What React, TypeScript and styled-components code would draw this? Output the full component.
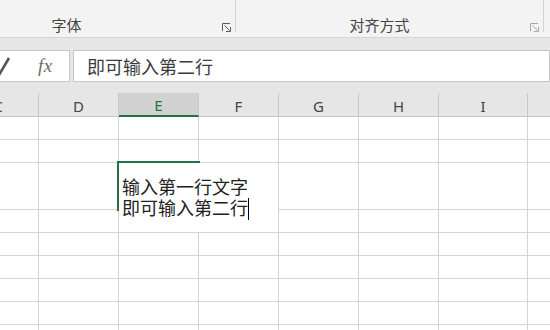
import React from 'react';
import styled, { createGlobalStyle } from 'styled-components';

const GlobalStyle = createGlobalStyle`
  html, body { margin: 0; padding: 0; background: #ffffff; }
  body { font-family: "Noto Sans", "Noto Sans CJK SC", sans-serif; }
  * { box-sizing: border-box; }
`;

const EXCEL_GREEN = '#217346';
const GRID = '#d4d4d4';

type Col = { label: string; w: number; sel?: boolean };
const COLS: Col[] = [
  { label: 'C', w: 81 },
  { label: 'D', w: 80 },
  { label: 'E', w: 80, sel: true },
  { label: 'F', w: 80 },
  { label: 'G', w: 80 },
  { label: 'H', w: 80 },
  { label: 'I', w: 89 },
  { label: '', w: 80 },
];
const ROWS = [23, 23, 47, 23, 23, 23, 23, 23, 23];
const colTemplate = COLS.map((c) => `${c.w}px`).join(' ');
const rowTemplate = ROWS.map((h) => `${h}px`).join(' ');

const Window = styled.div`
  width: 550px;
  height: 330px;
  overflow: hidden;
  background: #ffffff;
  display: flex;
  flex-direction: column;
`;

/* ---------- Ribbon ---------- */
const Ribbon = styled.div`
  flex: 0 0 auto;
  height: 38px;
  margin-left: -82px;
  background: #f3f3f3;
  border-bottom: 1px solid #d5d5d5;
  display: flex;
  align-items: flex-start;
`;

const Group = styled.div<{ $w: number }>`
  width: ${(p) => p.$w}px;
  height: 32px;
  border-right: 1px solid #d2d2d2;
  display: flex;
  flex: 0 0 auto;
`;

const GroupLabel = styled.div`
  flex: 1;
  padding-top: 17px;
  text-align: center;
  font-family: "Noto Sans CJK SC", sans-serif;
  font-size: 15px;
  line-height: 15px;
  color: #444444;
  white-space: nowrap;
`;

const LauncherSlot = styled.div`
  width: 20px;
  flex: 0 0 20px;
  padding: 23px 0 0 7px;
`;

const Launcher = ({ dim }: { dim?: boolean }) => (
  <svg width="9" height="9" viewBox="0 0 9 9" style={{ display: 'block' }}>
    <g fill="none" stroke={dim ? '#a8a8a8' : '#5c5c5c'} strokeWidth="1">
      <path d="M0.5 8 V0.5 H8" />
      <path d="M2.5 2.5 L7.5 7.5" />
      <path d="M4 8.5 H8.5 V4" />
    </g>
  </svg>
);

/* ---------- Formula bar ---------- */
const Band = styled.div`
  flex: 0 0 auto;
  background: #e6e6e6;
  padding: 12px 0 11px;
`;

const FormulaRow = styled.div`
  height: 32px;
  display: flex;
  gap: 3px;
`;

const NameArea = styled.div`
  width: 70px;
  flex: 0 0 70px;
  background: #ffffff;
  border: 1px solid #c6c6c6;
  border-left: none;
  display: flex;
  align-items: center;
`;

const CheckIcon = styled.svg`
  display: block;
  flex: 0 0 auto;
  overflow: visible;
`;

const Fx = styled.span`
  margin-left: 27px;
  font-family: "Liberation Serif", serif;
  font-style: italic;
  font-size: 19px;
  line-height: 30px;
  color: #6e6e6e;
  letter-spacing: 0.5px;
`;

const FormulaInput = styled.div`
  flex: 1;
  min-width: 0;
  background: #ffffff;
  border: 1px solid #c6c6c6;
  padding-left: 13px;
  font-family: "Noto Sans CJK SC", sans-serif;
  font-size: 18px;
  line-height: 30px;
  color: #3c3c3c;
  white-space: nowrap;
`;

/* ---------- Sheet ---------- */
const Sheet = styled.div`
  margin-left: -42px;
  width: 650px;
  flex: 1;
`;

const HeaderRow = styled.div`
  display: grid;
  grid-template-columns: ${colTemplate};
  background: #e6e6e6;
`;

const HeaderCell = styled.div<{ $sel?: boolean }>`
  height: 24px;
  display: flex;
  align-items: center;
  justify-content: center;
  padding-top: 2px;
  border-right: 1px solid #c8c8c8;
  border-bottom: ${(p) => (p.$sel ? `2px solid ${EXCEL_GREEN}` : '1px solid #c6c6c6')};
  background: ${(p) => (p.$sel ? '#d2d2d2' : 'transparent')};
  color: ${(p) => (p.$sel ? EXCEL_GREEN : '#444444')};
  font-family: "Noto Sans", sans-serif;
  font-size: 15px;
  line-height: 20px;
`;

const Body = styled.div`
  position: relative;
  display: grid;
  grid-template-columns: ${colTemplate};
  grid-template-rows: ${rowTemplate};
`;

const Cell = styled.div`
  border-right: 1px solid ${GRID};
  border-bottom: 1px solid ${GRID};
`;

const ActiveCell = styled.div`
  position: absolute;
  left: 159px;
  top: 44px;
  width: 83px;
  height: 50px;
  border: 2px solid ${EXCEL_GREEN};
`;

const CellEditor = styled.div`
  position: absolute;
  left: 161px;
  top: 46px;
  width: 159px;
  height: 69px;
  background: #ffffff;
  padding: 13px 0 0 3px;
  font-family: "Noto Sans CJK SC", sans-serif;
  font-size: 18px;
  line-height: 21px;
  color: #222222;
  white-space: nowrap;
`;

const EditorLine = styled.div`
  height: 21px;
`;

const Caret = styled.span`
  display: inline-block;
  width: 1px;
  height: 22px;
  background: #000000;
  vertical-align: -5px;
`;

export default function App() {
  return (
    <>
      <GlobalStyle />
      <Window>
        <Ribbon>
          <Group $w={318}>
            <GroupLabel>字体</GroupLabel>
            <LauncherSlot>
              <Launcher />
            </LauncherSlot>
          </Group>
          <Group $w={308}>
            <GroupLabel>对齐方式</GroupLabel>
            <LauncherSlot>
              <Launcher dim />
            </LauncherSlot>
          </Group>
        </Ribbon>

        <Band>
          <FormulaRow>
            <NameArea>
              <CheckIcon width="11" height="20" viewBox="0 0 11 20">
                <polyline
                  points="-6,12 -1,19 9,2"
                  fill="none"
                  stroke="#555555"
                  strokeWidth="2.6"
                />
              </CheckIcon>
              <Fx>fx</Fx>
            </NameArea>
            <FormulaInput>即可输入第二行</FormulaInput>
          </FormulaRow>
        </Band>

        <Sheet>
          <HeaderRow>
            {COLS.map((c, i) => (
              <HeaderCell key={i} $sel={c.sel}>
                {c.label}
              </HeaderCell>
            ))}
          </HeaderRow>
          <Body>
            {ROWS.map((_, r) => COLS.map((_c, i) => <Cell key={`${r}-${i}`} />))}
            <ActiveCell />
            <CellEditor>
              <EditorLine>输入第一行文字</EditorLine>
              <EditorLine>
                即可输入第二行
                <Caret />
              </EditorLine>
            </CellEditor>
          </Body>
        </Sheet>
      </Window>
    </>
  );
}
